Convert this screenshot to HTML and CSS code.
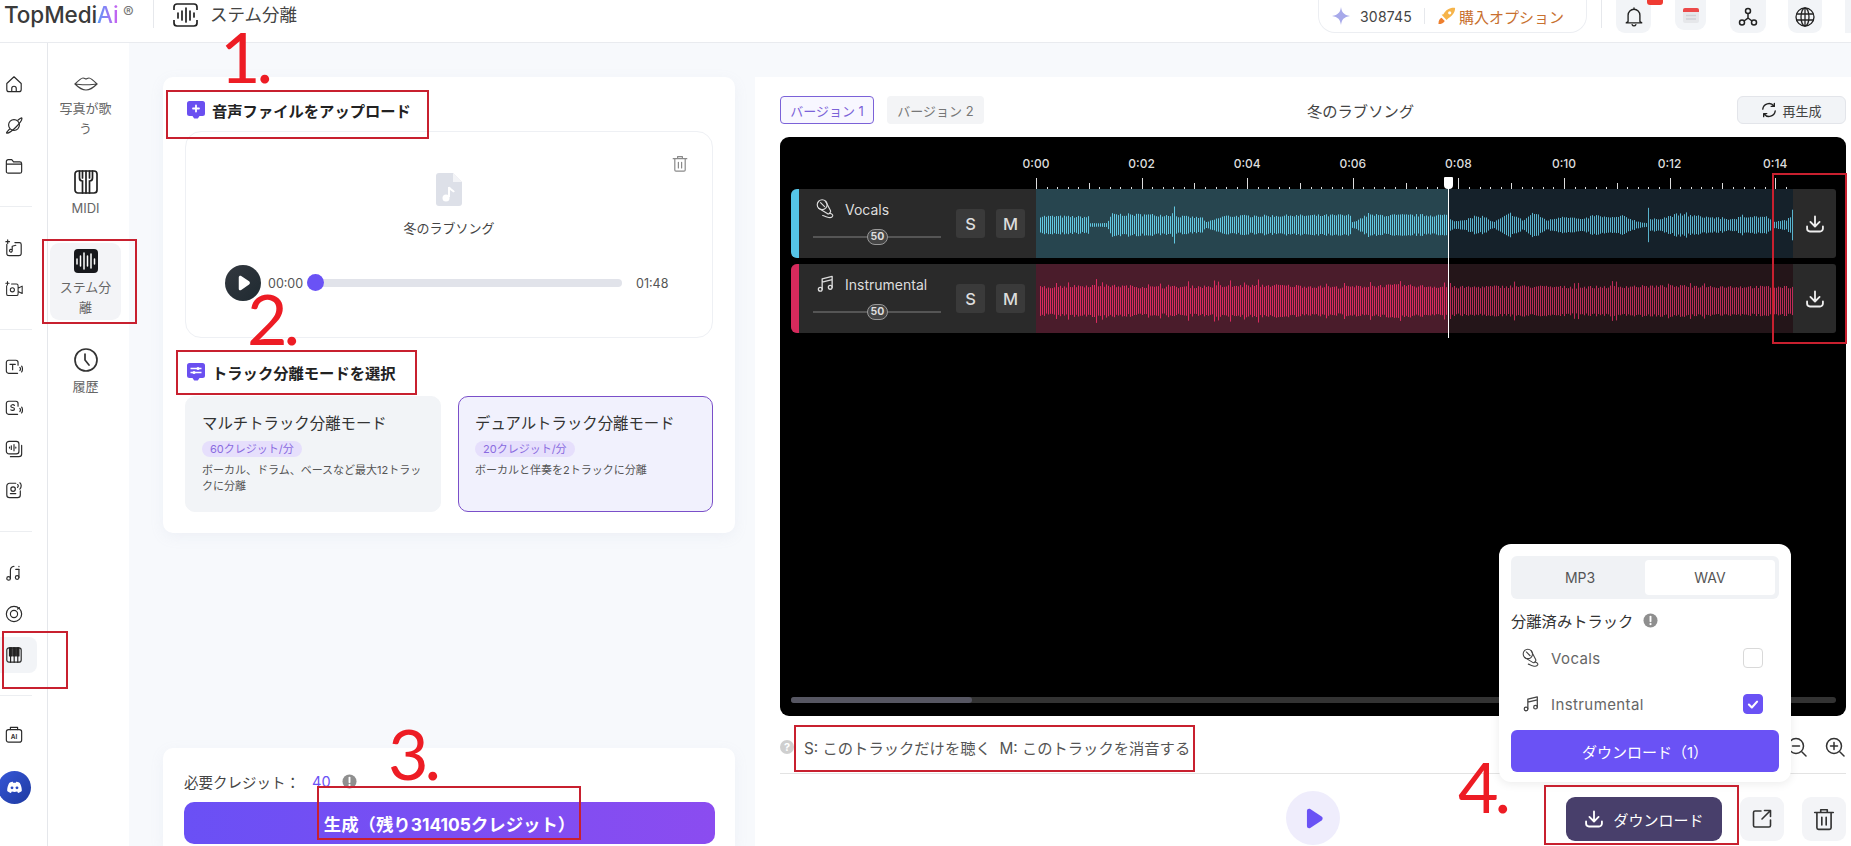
FILE: index.html
```html
<!DOCTYPE html>
<html lang="ja">
<head>
<meta charset="utf-8">
<title>ステム分離</title>
<link rel="stylesheet" href="styles.css">
</head>
<body>
<svg class="defs" width="0" height="0" aria-hidden="true">
  <symbol id="i-mic" viewBox="0 0 20 21"><g fill="none" stroke="currentColor" stroke-width="1.200" stroke-linecap="round" stroke-linejoin="round"><circle cx="6.500" cy="6" r="5.200"/><path d="M2.800 9.800 12.300 15.600c.8.300 1.200 0 1.700-.4l1-1.200c.5-.6.600-1 .2-1.800L10.200 2.500M4.800 3.800l4.200 4.200M14.500 15c2.200.7 3.500 1.600 3 3-.6 1.600-3.500 1.800-6 1-1.800-.6-3-1.300-4.500-1.700"/></g></symbol>
  <symbol id="i-note" viewBox="0 0 20 20"><g fill="none" stroke="currentColor" stroke-width="1.400" stroke-linecap="round" stroke-linejoin="round"><path d="M6.500 15.500V4.500L17 2v11.500M6.500 8 17 5.500"/><circle cx="4.500" cy="15.500" r="2"/><circle cx="15" cy="13.500" r="2"/></g></symbol>
  <symbol id="i-download" viewBox="0 0 24 24"><g fill="none" stroke="currentColor" stroke-width="2.200" stroke-linecap="round" stroke-linejoin="round"><path d="M12 3v11.500M6.500 9.500 12 15l5.500-5.500M2.500 15v2.500a3.500 3.500 0 0 0 3.500 3.500h12a3.500 3.500 0 0 0 3.500-3.500V15"/></g></symbol>
  <symbol id="i-info" viewBox="0 0 16 16"><circle cx="8" cy="8" r="7.500" fill="#8f8f8f"/><path d="M8 3.800v5" stroke="#fff" stroke-width="2" stroke-linecap="round"/><circle cx="8" cy="11.800" r="1.200" fill="#fff"/></symbol>
  <symbol id="i-trash" viewBox="0 0 20 22"><g fill="none" stroke="currentColor" stroke-width="1.500" stroke-linecap="round" stroke-linejoin="round"><path d="M1.500 5h17M7 5V2.500h6V5M3.500 5v14a1.500 1.500 0 0 0 1.500 1.500h10a1.500 1.500 0 0 0 1.500-1.500V5M8 9.500v7M12 9.500v7"/></g></symbol>
  <symbol id="i-title" viewBox="0 0 18 18"><path d="M2.500 0h13A2.500 2.500 0 0 1 18 2.500v10a2.500 2.500 0 0 1-2.500 2.500H12.500l-1.500 2.200a1 1 0 0 1-.8.300H7.800a1 1 0 0 1-.8-.3L5.500 15h-3A2.500 2.500 0 0 1 0 12.500v-10A2.500 2.500 0 0 1 2.500 0z" fill="#6a4ff0"/></symbol>
</svg>

<div class="app">
  <header class="topbar">
    <div class="logo">TopMedi<span class="logo-ai">Ai</span><span class="logo-reg">®</span></div>
    <div class="top-divider"></div>
    <svg class="page-icon" viewBox="0 0 25 24"><path d="M1 7V4a3 3 0 0 1 3-3h17a3 3 0 0 1 3 3v3M1 17v3a3 3 0 0 0 3 3h17a3 3 0 0 0 3-3v-3" fill="none" stroke="#222" stroke-width="1.700"/><path d="M5 10v5M9 8v9M13 5v14M17 8v9M21 10v4" fill="none" stroke="#222" stroke-width="1.700" stroke-linecap="round"/></svg>
    <div class="page-title">ステム分離</div>
    <div class="top-right">
      <div class="credit-pill">
        <svg class="star" viewBox="0 0 22 22"><path d="M11 0c.8 6.500 3.500 9.800 11 11-7.500 1.200-10.200 4.500-11 11-.8-6.500-3.500-9.800-11-11 7.500-1.200 10.200-4.500 11-11z" fill="#a7a9ea"/></svg>
        <span class="credit-num">308745</span>
        <span class="pill-sep"></span>
        <svg class="rocket" viewBox="0 0 20 20"><path d="M19 1c-6-.5-10 2-13 7l-2 .5 5.500 6 2-2C15 10 19 7 19 1z" fill="#f6b44a"/><path d="M4 12c-2 .5-3.500 3-3.500 7 3.500 0 6-1.500 7-3.500z" fill="#ee7f2d"/><circle cx="13" cy="6.500" r="1.800" fill="#fff"/></svg>
        <span class="buy">購入オプション</span>
      </div>
      <div class="top-divider pill-end"></div>
      <div class="top-btn bell">
        <svg viewBox="0 0 20 22" class="top-ico"><path d="M3.500 16V9a6.500 6.500 0 0 1 13 0v7l2 1.500h-17zM8 19.500a2.200 2.200 0 0 0 4 0M10 2.500V1" fill="none" stroke="#222" stroke-width="1.500" stroke-linecap="round" stroke-linejoin="round"/></svg>
        <span class="badge"></span>
      </div>
      <div class="top-btn cal">
        <svg viewBox="0 0 20 20" class="top-ico"><rect x="2" y="3" width="16" height="15" rx="2" fill="#e6e7ea"/><path d="M2 5a2 2 0 0 1 2-2h12a2 2 0 0 1 2 2v2H2z" fill="#ec4a4a"/><path d="M5 10.500h10M5 14h10" stroke="#cfd1d6" stroke-width="1.500"/></svg>
      </div>
      <div class="top-btn net">
        <svg viewBox="0 0 20 20" class="top-ico"><g fill="none" stroke="#222" stroke-width="1.500"><circle cx="10" cy="4" r="2.500"/><circle cx="4" cy="15.500" r="2.500"/><circle cx="16" cy="15.500" r="2.500"/><path d="M10 6.500V11l-4 3M10 11l4 3"/></g></svg>
      </div>
      <div class="top-btn globe">
        <svg viewBox="0 0 20 20" class="top-ico"><g fill="none" stroke="#222" stroke-width="1.300"><circle cx="10" cy="10" r="9"/><ellipse cx="10" cy="10" rx="4" ry="9"/><path d="M1.500 7h17M1.500 13h17M10 1v18"/></g></svg>
      </div>
      <div class="top-btn last"></div>
    </div>
  </header>

  <div class="body">
    <nav class="rail">
      <div class="rail-group g1">
        <div class="rail-item"><svg viewBox="0 0 20 20"><path d="M2 9.500 10 2l8 7.500V16a2.500 2.500 0 0 1-2.500 2.500h-11A2.500 2.500 0 0 1 2 16zM7.500 18.500V15a2.500 2.500 0 0 1 5 0v3.500"/></svg></div>
        <div class="rail-item"><svg viewBox="0 0 20 20"><circle cx="10" cy="10" r="6"/><path d="M5 14.500C2.500 17.500 1 19 2 19c1.500.3 6-2.500 10-6.500S19 4 18.800 2.500c-.2-1-2 0-4.500 2.200"/></svg></div>
        <div class="rail-item"><svg viewBox="0 0 20 20"><path d="M1.500 5A2 2 0 0 1 3.500 3h4l2 2.500h7a2 2 0 0 1 2 2V16a2 2 0 0 1-2 2h-13a2 2 0 0 1-2-2zM1.500 8h17"/></svg></div>
      </div>
      <div class="rail-line"></div>
      <div class="rail-group g2">
        <div class="rail-item"><svg viewBox="0 0 20 20"><path d="M2 6v10a2.500 2.500 0 0 0 2.500 2.500h11A2.500 2.500 0 0 0 18 16V6a2 2 0 0 0-2-2h-5M1 3h4M3 1v4"/><path d="M8 13V8l4-1M8 13a1.500 1.500 0 1 1-1-1.400"/></svg></div>
        <div class="rail-item"><svg viewBox="0 0 22 20"><path d="M2 6v10a2 2 0 0 0 2 2h10a2 2 0 0 0 2-2V6a2 2 0 0 0-2-2H8M1 3h4M3 1v4M16 9l5-2.500v9L16 13"/><circle cx="9" cy="11" r="2.500"/></svg></div>
      </div>
      <div class="rail-line"></div>
      <div class="rail-group g3">
        <div class="rail-item"><svg viewBox="0 0 20 20"><path d="M14 17H4a2.500 2.500 0 0 1-2.500-2.500V5A2.500 2.500 0 0 1 4 2.500h8A2.500 2.500 0 0 1 14.500 5v3M5.500 7h6M8.500 7v6M16.500 10.500c.8 1 .8 2.500 0 3.500M18.500 9c1.200 1.500 1.200 5 0 6.500"/></svg></div>
        <div class="rail-item"><svg viewBox="0 0 20 20"><path d="M14 17H4a2.500 2.500 0 0 1-2.500-2.500V5A2.500 2.500 0 0 1 4 2.500h8A2.500 2.500 0 0 1 14.500 5v3M10.500 7c-1-1-4-1-4 1s4 1 4 3-3 2-4 1M16.500 10.500c.8 1 .8 2.500 0 3.500M18.500 9c1.200 1.500 1.200 5 0 6.500"/></svg></div>
        <div class="rail-item"><svg viewBox="0 0 20 20"><rect x="1.500" y="1.500" width="14" height="14" rx="3"/><path d="M18.500 6v9.500a3 3 0 0 1-3 3H6M7 6.500v4M10 5v7M5 8v1M12 8v1"/></svg></div>
        <div class="rail-item"><svg viewBox="0 0 20 20"><path d="M12 2.500H5A3 3 0 0 0 2 5.500v10a3 3 0 0 0 3 3h9a3 3 0 0 0 3-3V11"/><circle cx="9" cy="9" r="2.500"/><path d="M6 14h6M14 4c1 .5 1 2 0 3M16.500 2c2 1.500 2 5 0 7"/></svg></div>
      </div>
      <div class="rail-line"></div>
      <div class="rail-group g4">
        <div class="rail-item"><svg viewBox="0 0 20 20"><path d="M6 16V7c0-2.500 1-4 4-4.500M15.500 6v9M15.500 2.500v.5"/><circle cx="4" cy="16" r="2"/><circle cx="13.500" cy="15" r="2"/><path d="M12 6h3.500"/></svg></div>
        <div class="rail-item"><svg viewBox="0 0 20 20"><circle cx="10" cy="10" r="8.500"/><circle cx="10" cy="10" r="4"/><path d="M14 4.500 16 3"/></svg></div>
        <div class="rail-item active"><svg viewBox="0 0 20 20"><rect x="2" y="2" width="16" height="16" rx="2.500"/><path class="solid" d="M5 2h2.500v9H5zM9 2h2.500v9H9zM13 2h2.500v9H13zM6.200 11v7M10.200 11v7M14.200 11v7"/></svg></div>
      </div>
      <div class="rail-line"></div>
      <div class="rail-group g5">
        <div class="rail-item"><svg viewBox="0 0 20 20"><rect x="1.500" y="4" width="17" height="14" rx="2.500"/><path d="M6 4V1.500h8V4"/><text x="10" y="14.500" class="ai-text">AI</text></svg></div>
      </div>
      <div class="discord"><svg viewBox="0 0 24 18"><path d="M4.500 2.500C7 1.200 9 1 9.500 1l.6 1.400h3.800L14.500 1c.5 0 2.500.2 5 1.500 2 3.500 3 7.500 2.800 11.500-1.800 1.500-3.800 2.300-5.300 2.800l-1.200-2c-2.600.8-5 .8-7.600 0l-1.200 2c-1.500-.5-3.500-1.300-5.300-2.800C1.500 10 2.500 6 4.500 2.500z" fill="#fff"/><circle cx="8.500" cy="9.500" r="2" fill="#2c4bc4"/><circle cx="15.500" cy="9.500" r="2" fill="#2c4bc4"/></svg></div>
    </nav>

    <aside class="subrail">
      <div class="sub-item">
        <svg class="lips" viewBox="0 0 24 14"><path d="M1 7c3-3 6-6 8-6 1.500 0 2 1 3 1s1.500-1 3-1c2 0 5 3 8 6-3 3-6 6-11 6S4 10 1 7zM1 7c5 1 17 1 22 0" fill="none" stroke="#444" stroke-width="1.200"/></svg>
        <div class="sub-text">写真が歌う</div>
      </div>
      <div class="sub-item">
        <svg class="sub-ico" viewBox="0 0 24 24"><g fill="none" stroke="#222" stroke-width="1.700" stroke-linecap="round"><rect x="1" y="1" width="22" height="22" rx="3"/><path d="M5.500 1v7c0 2 1.500 3 3 3v12M12 1v10M12 11v12M18.500 1v7c0 2-1.500 3-3 3v12M8.500 1v7M15.500 1v7"/></g></svg>
        <div class="sub-text">MIDI</div>
      </div>
      <div class="sub-item current">
        <svg class="sub-ico" viewBox="0 0 24 24"><rect width="24" height="24" rx="4" fill="#17181c"/><path d="M3 10v5M6.500 7v10M10 4v16M13.500 7v10M17 5v14M20.500 10v5" fill="none" stroke="#fff" stroke-width="1.500" stroke-linecap="round"/></svg>
        <div class="sub-text">ステム分離</div>
      </div>
      <div class="sub-item">
        <svg class="sub-ico" viewBox="0 0 24 24"><g fill="none" stroke="#333" stroke-width="1.700" stroke-linecap="round"><circle cx="12" cy="12" r="11"/><path d="M11 6v6l4 5"/></g></svg>
        <div class="sub-text">履歴</div>
      </div>
    </aside>

    <main class="main">
      <section class="left">
        <div class="card top-card">
          <div class="sec-title">
            <svg class="sec-ico" viewBox="0 0 18 18"><use href="#i-title"/><path d="M9 4.500v6M6 7.500h6" stroke="#fff" stroke-width="1.800" stroke-linecap="round"/></svg>
            音声ファイルをアップロード
          </div>
          <div class="upload">
            <svg class="up-trash"><use href="#i-trash"/></svg>
            <svg class="file-ico" viewBox="0 0 26 33"><path d="M3 0h14l9 9v21a3 3 0 0 1-3 3H3a3 3 0 0 1-3-3V3a3 3 0 0 1 3-3z" fill="#dde0e8"/><path d="M17 0v9h9z" fill="#f3f4f7"/><path d="M13 14v10" stroke="#fff" stroke-width="2"/><circle cx="10" cy="25" r="3.500" fill="#fff"/><path d="M13 14c1 3 4 3 5 5" stroke="#fff" stroke-width="2" fill="none"/></svg>
            <div class="file-name">冬のラブソング</div>
            <div class="player">
              <div class="play-dark"><svg viewBox="0 0 16 18"><path d="M2 2.500C2 1 3.500.3 4.800 1l9 6c1.300.8 1.300 3 0 3.800l-9 6.200C3.500 17.800 2 17 2 15.500z" fill="#fff"/></svg></div>
              <span class="ptime">00:00</span>
              <div class="ptrack"><span class="pknob"></span></div>
              <span class="ptime end">01:48</span>
            </div>
          </div>
          <div class="sec-title second">
            <svg class="sec-ico" viewBox="0 0 18 18"><use href="#i-title"/><path d="M3.500 5.500h11M3.500 9.500h11" stroke="#fff" stroke-width="1.300"/><circle cx="11" cy="5.500" r="1.500" fill="#fff"/><circle cx="7" cy="9.500" r="1.500" fill="#fff"/></svg>
            トラック分離モードを選択
          </div>
          <div class="modes">
            <div class="mode">
              <div class="mode-name">マルチトラック分離モード</div>
              <span class="mode-badge">60クレジット/分</span>
              <div class="mode-desc">ボーカル、ドラム、ベースなど最大12トラックに分離</div>
            </div>
            <div class="mode selected">
              <div class="mode-name">デュアルトラック分離モード</div>
              <span class="mode-badge">20クレジット/分</span>
              <div class="mode-desc">ボーカルと伴奏を2トラックに分離</div>
            </div>
          </div>
        </div>
        <div class="card gen-card">
          <div class="need">必要クレジット： <span class="need-num">40</span><svg class="info"><use href="#i-info"/></svg></div>
          <button class="gen-btn">生成（残り314105クレジット）</button>
        </div>
      </section>

      <section class="right">
        <div class="ver-row">
          <button class="ver on">バージョン 1</button>
          <button class="ver">バージョン 2</button>
          <div class="song-title">冬のラブソング</div>
          <button class="regen">
            <svg viewBox="0 0 18 18"><g fill="none" stroke="#222" stroke-width="1.500" stroke-linecap="round" stroke-linejoin="round"><path d="M2 8a7 7 0 0 1 12.500-3.500M16 10a7 7 0 0 1-12.500 3.500M15 1.500v3.500h-3.500M3 16.500V13h3.500"/></g></svg>
            再生成
          </button>
        </div>

        <div class="timeline">
          <div class="labels"><span>0:00</span><span>0:02</span><span>0:04</span><span>0:06</span><span>0:08</span><span>0:10</span><span>0:12</span><span>0:14</span></div>
          <svg class="ticks" id="ticks" width="1066" height="11"></svg>
          <div class="track vocals">
            <div class="t-head">
              <span class="t-bar"></span>
              <div class="t-info">
                <div class="t-name"><svg class="t-ico"><use href="#i-mic"/></svg>Vocals</div>
                <div class="t-slider"><span class="t-knob">50</span></div>
              </div>
              <button class="sm">S</button>
              <button class="sm">M</button>
            </div>
            <svg class="wave" id="wave-v" width="757" height="69"></svg>
            <div class="t-dl"><svg><use href="#i-download"/></svg></div>
          </div>
          <div class="track instr">
            <div class="t-head">
              <span class="t-bar"></span>
              <div class="t-info">
                <div class="t-name"><svg class="t-ico"><use href="#i-note"/></svg>Instrumental</div>
                <div class="t-slider"><span class="t-knob">50</span></div>
              </div>
              <button class="sm">S</button>
              <button class="sm">M</button>
            </div>
            <svg class="wave" id="wave-i" width="757" height="69"></svg>
            <div class="t-dl"><svg><use href="#i-download"/></svg></div>
          </div>
          <div class="hscroll"><span class="hthumb"></span></div>
          <div class="playhead"><span class="ph-handle"></span></div>
        </div>

        <div class="hint-row">
          <span class="qmark">?</span>
          <span class="hint">S: このトラックだけを聴く&nbsp;&nbsp;M: このトラックを消音する</span>
          <div class="zooms">
            <svg viewBox="0 0 20 20"><g fill="none" stroke="#333" stroke-width="1.500" stroke-linecap="round"><circle cx="9" cy="9" r="7.500"/><path d="m15 15 4 4M5.500 9h7"/></g></svg>
            <svg viewBox="0 0 20 20"><g fill="none" stroke="#333" stroke-width="1.500" stroke-linecap="round"><circle cx="9" cy="9" r="7.500"/><path d="m15 15 4 4M5.500 9h7M9 5.500v7"/></g></svg>
          </div>
        </div>

        <div class="foot">
          <span></span>
          <div class="big-play"><svg viewBox="0 0 18 22"><path d="M1 3C1 1 3 0 4.500 1l12 8c1.500 1 1.500 3 0 4l-12 8C3 22 1 21 1 19z" fill="#6a52f5"/></svg></div>
          <div class="actions">
            <button class="dl-main"><svg><use href="#i-download"/></svg>ダウンロード</button>
            <button class="act"><svg viewBox="0 0 20 20"><path d="M9 2H3a1.500 1.500 0 0 0-1.500 1.500v13A1.500 1.500 0 0 0 3 18h14a1.500 1.500 0 0 0 1.500-1.500V11M12.500 1.500h6v6M18.500 1.500 10 10" fill="none" stroke="#333" stroke-width="1.600" stroke-linecap="round" stroke-linejoin="round"/></svg></button>
            <button class="act"><svg class="act-trash"><use href="#i-trash"/></svg></button>
          </div>
        </div>

        <div class="popup">
          <div class="seg"><span class="seg-opt">MP3</span><span class="seg-opt on">WAV</span></div>
          <div class="pop-head">分離済みトラック<svg class="info"><use href="#i-info"/></svg></div>
          <div class="pop-row first"><svg class="pop-ico"><use href="#i-mic"/></svg><span class="pop-name">Vocals</span><span class="check"></span></div>
          <div class="pop-row"><svg class="pop-ico"><use href="#i-note"/></svg><span class="pop-name">Instrumental</span><span class="check on"><svg viewBox="0 0 12 12"><path d="m2.500 6.500 2.500 2.500 4.500-5" fill="none" stroke="#fff" stroke-width="1.800" stroke-linecap="round" stroke-linejoin="round"/></svg></span></div>
          <button class="pop-dl">ダウンロード（1）</button>
        </div>
      </section>
    </main>
  </div>

  <div class="note-layer">
    <span class="mark m-song"></span>
    <span class="mark m-stem"></span>
    <span class="mark m-mode"></span>
    <span class="mark m-piano"></span>
    <span class="mark m-gen"></span>
    <span class="mark m-hint"></span>
    <span class="mark m-dl"></span>
    <span class="mark m-tracks"></span>
    <span class="num n1">1.</span>
    <span class="num n2">2.</span>
    <span class="num n3">3.</span>
    <span class="num n4">4.</span>
  </div>
</div>
<script src="app.js"></script>
</body>
</html>
```
FILE: styles.css
```css
* { box-sizing: border-box; }
html, body { margin: 0; padding: 0; background: #fff; }
body { font-family: "Inter", "Noto Sans CJK JP", sans-serif; color: #333; }
button { font-family: inherit; border: 0; padding: 0; cursor: pointer; }
.defs { position: absolute; }

.app { position: relative; width: 1851px; height: 846px; overflow: hidden; display: flex; flex-direction: column; }

/* top bar */
.topbar { height: 43px; flex: none; display: flex; align-items: flex-start; background: #fff; border-bottom: 1px solid #e9ebef; }
.logo { position: relative; margin-left: 4px; width: 135px; font-size: 22.500px; line-height: 30px; font-weight: 500; color: #3a3a3a; letter-spacing: -.1px; flex: none; }
.logo-ai { background: linear-gradient(90deg, #5a9af8, #d05cf0); -webkit-background-clip: text; background-clip: text; color: transparent; }
.logo-reg { position: absolute; left: 119px; top: -3px; font-size: 16px; font-weight: 400; color: #777; }
.top-divider { width: 1px; height: 28px; flex: none; background: #e6e8ec; margin-left: 14px; }
.top-divider.pill-end { margin: 0 14px; }
.page-icon { width: 25px; height: 24px; flex: none; margin: 3px 12px 0 19px; }
.page-title { font-size: 17.500px; line-height: 30px; color: #444; }
.top-right { margin-left: auto; display: flex; align-items: flex-start; flex: none; }
.credit-pill { display: flex; align-items: center; flex: none; width: 269px; height: 33px; padding: 0 0 0 13px; border: 1px solid #eceef2; border-top: 0; border-radius: 0 0 17px 17px; }
.star { width: 18px; height: 18px; flex: none; }
.credit-num { margin-left: 10px; font-size: 14px; color: #444; letter-spacing: .2px; }
.pill-sep { width: 1px; height: 16px; flex: none; background: #e6e8ec; margin: 0 13px 0 12px; }
.rocket { width: 18px; height: 18px; flex: none; }
.buy { margin-left: 3px; font-size: 15px; color: #c8702f; white-space: nowrap; }
.top-btn { position: relative; flex: none; display: flex; align-items: center; justify-content: center; width: 35px; height: 33px; background: #f2f4f7; border-radius: 0 0 9px 9px; margin-right: 24px; }
.top-btn.cal { width: 31px; height: 30px; margin-right: 24px; }
.top-btn.net { width: 36px; margin-right: 22px; }
.top-btn.globe { width: 34px; margin-right: 23px; }
.top-btn.last { width: 6px; margin-right: 0; border-radius: 0; }
.top-ico { width: 20px; height: 20px; }
.badge { position: absolute; left: 31px; top: 0; width: 16px; height: 5px; border-radius: 0 0 3px 3px; background: #ef3b32; }

.body { flex: 1; min-height: 0; display: flex; }

/* first rail */
.rail { width: 48px; flex: none; border-right: 1px solid #e5e7eb; background: #fff; display: flex; flex-direction: column; }
.rail-group { display: flex; flex-direction: column; }
.rail-group.g1 { padding: 20px 0; }
.rail-group.g2 { padding: 20px 0; }
.rail-group.g3 { padding: 16px 0 21px; }
.rail-group.g4 { padding: 20px 0; }
.rail-group.g5 { padding: 18px 0 0; }
.rail-line { height: 1px; width: 32px; background: #eceef1; }
.rail-item { width: 37px; height: 41px; padding-left: 5px; display: flex; align-items: center; border-radius: 0 8px 8px 0; }
.rail-item svg { width: 18px; height: 18px; fill: none; stroke: #2a2a2a; stroke-width: 1.300; stroke-linecap: round; stroke-linejoin: round; }
.rail-item.active { height: 36px; margin: 3px 0 2px; background: #f2f4f7; }
.rail-item .solid { fill: #222; stroke: #222; }
.ai-text { font: 700 7px "Inter", sans-serif; fill: #333; stroke: none; text-anchor: middle; }
.discord { width: 33px; height: 33px; flex: none; margin: 16px 0 0 -2px; border-radius: 50%; background: linear-gradient(135deg, #3657d8, #1e3aa0); display: flex; align-items: center; justify-content: center; }
.discord svg { width: 17px; height: 13px; }

/* second rail */
.subrail { width: 81px; flex: none; background: #fff; padding: 31px 0 0 2px; display: flex; flex-direction: column; }
.sub-item { width: 71px; display: flex; flex-direction: column; align-items: center; gap: 4px; margin-bottom: 32px; }
.sub-item:nth-child(2) { margin-bottom: 25px; }
.sub-item.current { background: #f3f4f7; border-radius: 9px; padding: 6px 0 3px; margin-bottom: 28px; }
.lips { width: 24px; height: 20px; }
.sub-ico { width: 24px; height: 24px; }
.sub-text { width: 56px; font-size: 13px; line-height: 20px; color: #666; text-align: center; }

/* main */
.main { flex: 1; min-width: 0; display: flex; background: #f7f9fc; padding: 34px 0 0 34px; }
.left { width: 572px; flex: none; display: flex; flex-direction: column; justify-content: space-between; }
.card { background: #fff; border-radius: 10px; box-shadow: 0 4px 14px rgba(160, 170, 200, .1); }
.top-card { padding: 20px 22px 21px; }
.sec-title { display: flex; align-items: center; height: 26px; padding-left: 2px; margin-bottom: 8px; font-size: 15.300px; font-weight: 700; color: #222; white-space: nowrap; }
.sec-title.second { margin: 21px 0 11px; }
.sec-ico { width: 18px; height: 18px; margin-right: 7px; flex: none; }
.upload { position: relative; height: 207px; border: 1px solid #eef0f4; border-radius: 16px; padding-top: 41px; display: flex; flex-direction: column; align-items: center; }
.up-trash { position: absolute; left: 486px; top: 22px; width: 16px; height: 19px; color: #8a8a8a; }
.file-ico { width: 26px; height: 33px; flex: none; }
.file-name { margin-top: 12px; font-size: 13px; line-height: 20px; color: #444; }
.player { width: 100%; margin-top: 27px; padding: 0 44px 0 39px; display: flex; align-items: center; }
.play-dark { width: 36px; height: 36px; flex: none; border-radius: 50%; background: linear-gradient(135deg, #33383f, #1f2a31); display: flex; align-items: center; justify-content: center; }
.play-dark svg { width: 14px; height: 16px; margin-left: 2px; }
.ptime { margin-left: 7px; font-size: 12.500px; color: #555; width: 36px; flex: none; }
.ptime.end { margin-left: 14px; width: 32px; }
.ptrack { position: relative; flex: 1; height: 8px; margin-left: 3px; border-radius: 4px; background: #e1e3ea; }
.pknob { position: absolute; left: 0; top: -5px; width: 17px; height: 17px; border-radius: 50%; background: #6a52f5; }
.modes { display: grid; grid-template-columns: 256px 255px; gap: 17px; }
.mode { height: 116px; padding: 16px 16px 0; border-radius: 10px; background: #f2f4f7; border: 1px solid #f2f4f7; }
.mode.selected { background: #f1f1fd; border-color: #7a4fc9; }
.mode-name { font-size: 15.400px; line-height: 22px; color: #333; white-space: nowrap; }
.mode-badge { display: inline-block; margin-top: 6px; height: 16px; padding: 0 8px; border-radius: 8px; background: #e6dffc; color: #8a6be0; font-size: 11px; line-height: 16px; }
.mode-desc { margin-top: 5px; font-size: 11px; line-height: 16px; color: #555; }
.gen-card { height: 98px; padding: 22px 21px 0; border-radius: 10px 10px 0 0; }
.need { display: flex; align-items: center; height: 22px; font-size: 14.500px; color: #444; white-space: pre; }
.need-num { color: #6a52f5; margin-left: 8px; }
.info { width: 15px; height: 15px; margin-left: 11px; flex: none; }
.gen-btn { display: block; width: 531px; height: 42px; margin-top: 10px; border-radius: 10px; background: linear-gradient(90deg, #6a50f5, #8b4cf0); color: #fff; font-size: 17.400px; font-weight: 700; }

/* right panel */
.right { position: relative; flex: 1; min-width: 0; margin-left: 20px; background: #fff; padding: 19px 5px 0 25px; display: flex; flex-direction: column; }
.ver-row { display: flex; align-items: center; height: 28px; margin-bottom: 13px; }
.ver { height: 28px; width: 97px; margin-right: 13px; background: #f3f4f6; color: #777; font-size: 13px; border-radius: 4px; white-space: nowrap; }
.ver.on { width: 94px; background: #f8f7ff; color: #7b62d8; border: 1px solid #7b62d8; }
.song-title { flex: 1; text-align: center; font-size: 15.300px; color: #444; margin-left: -13px; }
.regen { width: 109px; height: 28px; display: flex; align-items: center; justify-content: center; gap: 5px; background: #f2f4f7; border: 1px solid #e3e5ea; border-radius: 6px; font-size: 13px; color: #444; }
.regen svg { width: 16px; height: 16px; }

.timeline { position: relative; height: 579px; flex: none; background: #000; border-radius: 9px; padding-left: 11px; display: flex; flex-direction: column; }
.labels { display: flex; margin-left: 192.200px; padding-top: 20px; height: 41px; color: #ddd; font-size: 12px; font-weight: 500; line-height: 14px; }
.labels span { width: 105.600px; text-align: center; flex: none; }
.ticks { display: block; margin-left: -11px; flex: none; }
.track { display: flex; width: 1045px; height: 69px; flex: none; margin-bottom: 6px; }
.t-head { width: 245px; flex: none; background: #2a2a2a; display: flex; align-items: center; border-radius: 6px 0 0 6px; }
.t-bar { width: 8px; height: 100%; border-radius: 6px 0 0 6px; flex: none; }
.vocals .t-bar { background: #55c5e8; }
.instr .t-bar { background: #d62a5c; }
.t-info { width: 128px; margin-left: 14px; flex: none; align-self: flex-start; padding-top: 10px; }
.t-name { display: flex; align-items: center; height: 20px; font-size: 14px; color: #ddd; white-space: nowrap; }
.t-ico { width: 19px; height: 20px; margin: 0 10px 0 3px; flex: none; color: #ddd; }
.t-slider { position: relative; height: 2px; margin-top: 17px; background: #555; }
.t-knob { position: absolute; left: 54px; top: -7px; width: 21px; height: 16px; border: 1px solid #999; border-radius: 8px; background: #444; color: #ddd; font-size: 10.500px; font-weight: 700; line-height: 14px; text-align: center; }
.sm { width: 29px; height: 29px; flex: none; margin-left: 15px; background: #3a3a3a; color: #ddd; border-radius: 3px; font-size: 16.500px; font-weight: 500; }
.sm + .sm { margin-left: 11px; }
.wave { display: block; flex: none; }
.t-dl { width: 43px; flex: none; background: #2a2a2a; display: flex; align-items: center; justify-content: center; color: #eee; border-radius: 0 3px 3px 0; }
.t-dl svg { width: 20px; height: 20px; }
.hscroll { height: 6px; width: 1045px; margin-top: 358px; border-radius: 3px; background: #333; }
.hthumb { display: block; width: 181px; height: 6px; border-radius: 3px; background: #565662; }
.playhead { position: absolute; left: 668px; top: 40px; width: 1px; height: 161px; background: #fff; }
.ph-handle { position: absolute; left: -4px; top: 0; width: 9px; height: 12px; background: #fff; border-radius: 1px 1px 4px 4px; }

.hint-row { position: relative; display: flex; align-items: center; height: 58px; flex: none; padding-top: 5px; border-bottom: 1px solid #e3e3e3; }
.qmark { width: 14px; height: 14px; flex: none; border-radius: 50%; background: #cfcfcf; color: #fff; font-size: 11px; font-weight: 700; line-height: 14px; text-align: center; }
.hint { margin-left: 10px; font-size: 15.300px; color: #555; white-space: nowrap; }
.zooms { display: flex; gap: 18px; margin-left: auto; margin-right: 1px; }
.zooms svg { width: 20px; height: 20px; }

.foot { flex: 1; display: grid; grid-template-columns: 1fr auto 1fr; padding-top: 17px; }
.big-play { width: 54px; height: 54px; border-radius: 50%; background: #efedfc; display: flex; align-items: center; justify-content: center; }
.big-play svg { width: 17px; height: 21px; margin-left: 3px; }
.actions { display: flex; justify-content: flex-end; gap: 18px; margin-top: 6px; }
.dl-main { width: 156px; height: 44px; display: flex; align-items: center; justify-content: center; gap: 9px; border-radius: 9px; background: #483f6b; color: #fff; font-size: 15px; white-space: nowrap; }
.dl-main svg { width: 20px; height: 20px; }
.act { width: 44px; height: 44px; border-radius: 9px; background: #f3f4f7; color: #333; display: flex; align-items: center; justify-content: center; }
.act svg { width: 20px; height: 20px; }
.act .act-trash { width: 22px; height: 24px; }

.popup { position: absolute; left: 744px; top: 467px; width: 292px; height: 238px; padding: 12px 12px 0; background: #fff; border-radius: 12px; box-shadow: 0 2px 10px rgba(0, 0, 0, .08); display: flex; flex-direction: column; }
.seg { display: flex; height: 43px; flex: none; padding: 4px; border-radius: 6px; background: #f0f2f5; }
.seg-opt { flex: 1; display: flex; align-items: center; justify-content: center; font-size: 14px; color: #555; border-radius: 4px; }
.seg-opt.on { background: #fff; flex: none; width: 130px; }
.pop-head { display: flex; align-items: center; height: 20px; margin-top: 11px; font-size: 15.300px; color: #333; white-space: nowrap; }
.pop-head .info { margin-left: 10px; }
.pop-row { display: flex; align-items: center; height: 46px; padding-left: 11px; }
.pop-row.first { margin-top: 5px; }
.pop-ico { width: 18px; height: 20px; color: #444; flex: none; }
.pop-name { margin-left: 11px; font-size: 15px; letter-spacing: .4px; color: #666; }
.check { margin-left: auto; margin-right: 16px; width: 20px; height: 20px; border: 1px solid #d9d9d9; border-radius: 4px; background: #fff; }
.check.on { background: #6a52f5; border-color: #6a52f5; display: flex; align-items: center; justify-content: center; }
.check svg { width: 14px; height: 14px; }
.pop-dl { height: 42px; flex: none; margin-top: 3px; border-radius: 6px; background: #6a52f5; color: #fff; font-size: 15px; }

/* red annotations drawn over the screenshot */
.note-layer { position: absolute; inset: 0; pointer-events: none; }
.mark { position: absolute; border: 2px solid #c8202f; }
.m-song { left: 166px; top: 90px; width: 263px; height: 49px; }
.m-stem { left: 42px; top: 239px; width: 95px; height: 85px; }
.m-mode { left: 176px; top: 350px; width: 241px; height: 45px; }
.m-piano { left: 2px; top: 631px; width: 66px; height: 58px; }
.m-gen { left: 317px; top: 786px; width: 264px; height: 54px; }
.m-hint { left: 794px; top: 725px; width: 401px; height: 47px; }
.m-dl { left: 1544px; top: 785px; width: 195px; height: 60px; }
.m-tracks { left: 1772px; top: 173px; width: 75px; height: 171px; }
.num { position: absolute; font-family: "Lato", sans-serif; font-size: 70px; line-height: 70px; color: #ed1c24; letter-spacing: -4px; }
.n1 { left: 220px; top: 21px; }
.n2 { left: 247px; top: 283px; }
.n3 { left: 388px; top: 718px; }
.n4 { left: 1458px; top: 751px; }
```
FILE: app.js
```js
(function () {
  var NS = "http://www.w3.org/2000/svg";
  var seed = 7;
  function rnd() { seed = (seed * 16807) % 2147483647; return seed / 2147483647; }

  function add(svg, tag, attrs) {
    var el = document.createElementNS(NS, tag);
    for (var k in attrs) el.setAttribute(k, attrs[k]);
    svg.appendChild(el);
  }

  function envAt(env, x) {
    for (var i = 1; i < env.length; i++) {
      if (x <= env[i][0]) {
        var a = env[i - 1], b = env[i], t = (x - a[0]) / (b[0] - a[0]);
        return a[1] + (b[1] - a[1]) * t;
      }
    }
    return env[env.length - 1][1];
  }

  function wave(id, cfg) {
    var svg = document.getElementById(id);
    var split = 412;
    add(svg, "rect", { x: 0, y: 0, width: split, height: 69, fill: cfg.bgPlayed });
    add(svg, "rect", { x: split, y: 0, width: 757 - split, height: 69, fill: cfg.bgRest });
    var d1 = "", d2 = "";
    for (var x = 4; x < 757; x += 2) {
      var a = envAt(cfg.env, x) * (cfg.min + rnd() * (1 - cfg.min));
      if (rnd() < cfg.spikeP) a *= cfg.spike;
      var s = "M" + (Math.round(x) + 0.5) + " " + (cfg.cy - a).toFixed(1) + "V" + (cfg.cy + a).toFixed(1);
      if (x < split) d1 += s; else d2 += s;
    }
    add(svg, "path", { d: d1, stroke: cfg.played, "stroke-width": 1, fill: "none" });
    add(svg, "path", { d: d2, stroke: cfg.rest, "stroke-width": 1, fill: "none" });
  }

  var ticks = document.getElementById("ticks");
  var path = "";
  for (var i = 0; i * 10.56 < 750; i++) {
    var x = Math.round(256 + i * 10.56) + 0.5;
    var h = i % 10 === 0 ? 11 : i % 5 === 0 ? 6 : 2;
    path += "M" + x + " 11V" + (11 - h);
  }
  add(ticks, "path", { d: path, stroke: "#ddd", "stroke-width": 1, fill: "none" });

  wave("wave-v", {
    cy: 36, min: 0.75, spikeP: 0.02, spike: 1.2,
    bgPlayed: "#27454f", bgRest: "#15212a", played: "#62c8e2", rest: "#58b2cc",
    env: [[4,10],[52,9],[54,2],[71,2],[75,12],[134,11],[138,20],[140,10],[166,8],[170,3],[188,10],[314,11],[316,3],[331,11],[411,11],[417,4],[447,10],[457,3],[474,13],[487,5],[497,14],[511,5],[527,10],[547,6],[557,11],[574,8],[587,10],[601,4],[611,2],[612,20],[614,6],[627,8],[641,12],[700,6],[703,10],[731,9],[737,3],[751,6],[756,13]]
  });
  wave("wave-i", {
    cy: 37, min: 0.82, spikeP: 0.06, spike: 1.3,
    bgPlayed: "#4a1c2b", bgRest: "#241519", played: "#dc2a5f", rest: "#bd2b57",
    env: [[4,15],[60,17],[120,15],[180,16],[240,17],[300,15],[360,17],[420,15],[480,16],[540,15],[600,16],[660,16],[757,15]]
  });
})();
```
